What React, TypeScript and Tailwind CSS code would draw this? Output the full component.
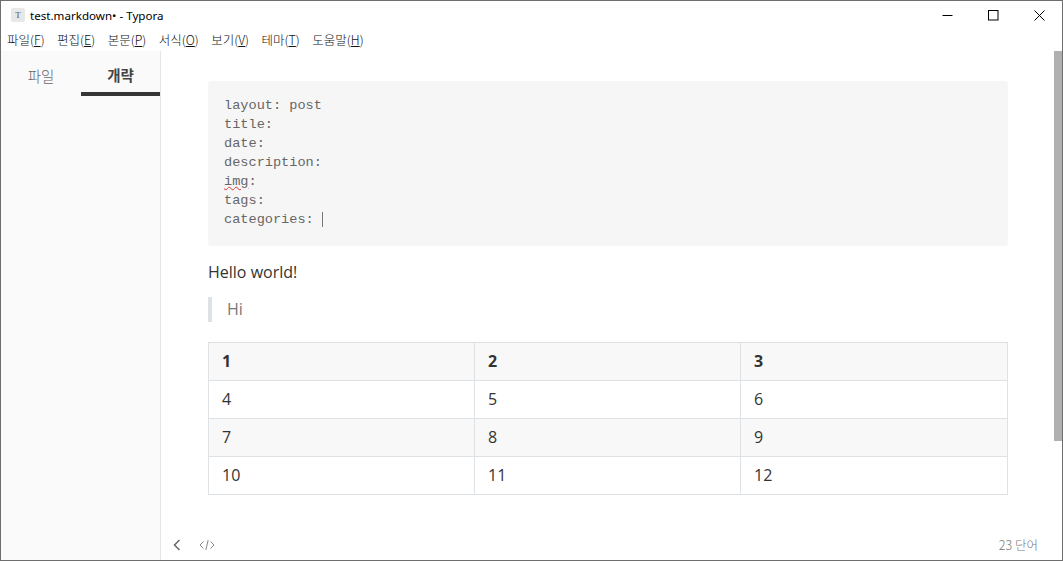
import React from 'react'

const menus = [
  ['파일', 'F'],
  ['편집', 'E'],
  ['본문', 'P'],
  ['서식', 'O'],
  ['보기', 'V'],
  ['테마', 'T'],
  ['도움말', 'H'],
]

const frontMatter = ['layout: post', 'title:', 'date:', 'description:', 'img:', 'tags:', 'categories:']

const rows = [
  ['1', '2', '3'],
  ['4', '5', '6'],
  ['7', '8', '9'],
  ['10', '11', '12'],
]

const ui = { fontFamily: '"Noto Sans CJK KR", "Noto Sans", sans-serif' }

function TitleBar() {
  return (
    <div className="flex h-[29px] items-center justify-between text-[12px] text-black">
      <div className="flex items-center pl-[10px]">
        <div className="flex h-[14px] w-[14px] items-center justify-center rounded-[2px] bg-[#e8e8e8] font-['Liberation_Serif',serif] text-[9px] text-[#555]">
          T
        </div>
        <span className="ml-[5px] pt-[1px] font-['Noto_Sans',sans-serif] text-[11.6px]">test.markdown• - Typora</span>
      </div>
      <div className="flex items-center">
        <div className="flex h-[29px] w-[46px] items-center justify-center">
          <svg width="11" height="11" viewBox="0 0 11 11"><path d="M0.5 5.5h10" stroke="#000" fill="none" /></svg>
        </div>
        <div className="flex h-[29px] w-[46px] items-center justify-center">
          <svg width="11" height="11" viewBox="0 0 11 11"><rect x="0.5" y="0.5" width="9.5" height="9.5" stroke="#000" fill="none" /></svg>
        </div>
        <div className="flex h-[29px] w-[46px] items-center justify-center">
          <svg width="11" height="11" viewBox="0 0 11 11"><path d="M0.5 0.5l10 10M10.5 0.5l-10 10" stroke="#000" fill="none" /></svg>
        </div>
      </div>
    </div>
  )
}

function MenuBar() {
  return (
    <div className="flex h-[21px] items-center gap-[12.5px] pl-[6px] text-[12.5px] text-[#111]" style={ui}>
      {menus.map(([label, key]) => (
        <span key={key} className="whitespace-nowrap font-light">
          {label}(<span className="underline">{key}</span>)
        </span>
      ))}
    </div>
  )
}

function Sidebar() {
  return (
    <div className="flex w-[160px] shrink-0 flex-col border-r border-[#e5e5e5] bg-[#fafafa]" style={ui}>
      <div className="flex h-[45px] text-[14.5px]">
        <div className="flex w-[80px] items-center justify-center pt-[4px] font-light text-[#666]">파일</div>
        <div className="flex w-[79px] items-center justify-center border-b-[4px] border-[#363636] pt-[6px] font-bold text-[#444]">개략</div>
      </div>
    </div>
  )
}

function Editor() {
  return (
    <div className="relative flex min-w-0 flex-1 flex-col bg-white">
      <div className="flex-1 pl-[47px] pr-[54px] pt-[30px] font-['Open_Sans',sans-serif] text-[16px] text-[#333]">
        <div className="h-[165px] rounded-[3px] bg-[#f6f6f6] pl-[16px] pt-[15px] font-['Liberation_Mono',monospace] text-[13.6px] leading-[19px] text-[#666]">
          {frontMatter.map((line, i) => (
            <div key={line} className="flex h-[19px] items-center">
              {line === 'img:' ? (
                <>
                  <span className="underline decoration-[#d33] decoration-wavy decoration-1">img</span>:
                </>
              ) : (
                line
              )}
              {i === frontMatter.length - 1 && <span className="ml-[8px] h-[15px] w-px bg-[#777]" />}
            </div>
          ))}
        </div>
        <p className="mt-[15px] h-[22px] leading-[22px]">Hello world!</p>
        <div className="mt-[14px] h-[25px] border-l-[4px] border-[#dfe2e5] pl-[15px] leading-[25px] text-[#777]">Hi</div>
        <table className="mt-[20px] w-full table-fixed border-collapse">
          <colgroup>
            <col className="w-[266px]" />
            <col className="w-[266px]" />
            <col />
          </colgroup>
          <tbody>
            {rows.map((row, r) => (
              <tr key={row[0]} className={r % 2 === 0 ? 'h-[38px] bg-[#f8f8f8]' : 'h-[38px] bg-white'}>
                {row.map(cell => (
                  <td key={cell} className={r === 0 ? 'border border-[#dfe2e5] px-[13px] pb-[1px] font-bold' : 'border border-[#dfe2e5] px-[13px] pb-[1px]'}>
                    {cell}
                  </td>
                ))}
              </tr>
            ))}
          </tbody>
        </table>
      </div>
      <div className="flex h-[30px] items-center justify-between pl-[11px] pr-[24px] text-[#777]">
        <div className="flex items-center gap-[17px]">
          <svg width="10" height="12" viewBox="0 0 10 12"><path d="M7.5 1L2.5 6l5 5" stroke="#666" strokeWidth="1.5" fill="none" /></svg>
          <svg width="16" height="12" viewBox="0 0 16 12"><path d="M4.5 2.5L1 6l3.5 3.5M11.5 2.5L15 6l-3.5 3.5M9.2 1L6.8 11" stroke="#888" fill="none" /></svg>
        </div>
        <span className="text-[12.5px] font-light text-[#777]" style={ui}>23 단어</span>
      </div>
      <div className="absolute right-0 top-0 h-[390px] w-[8px] bg-[#b0b0b0]" />
    </div>
  )
}

export default function App() {
  return (
    <div className="relative flex h-[561px] w-[1063px] flex-col overflow-hidden border border-[#6e6e6e] bg-white">
      <TitleBar />
      <MenuBar />
      <div className="flex min-h-0 flex-1">
        <Sidebar />
        <Editor />
      </div>
    </div>
  )
}
